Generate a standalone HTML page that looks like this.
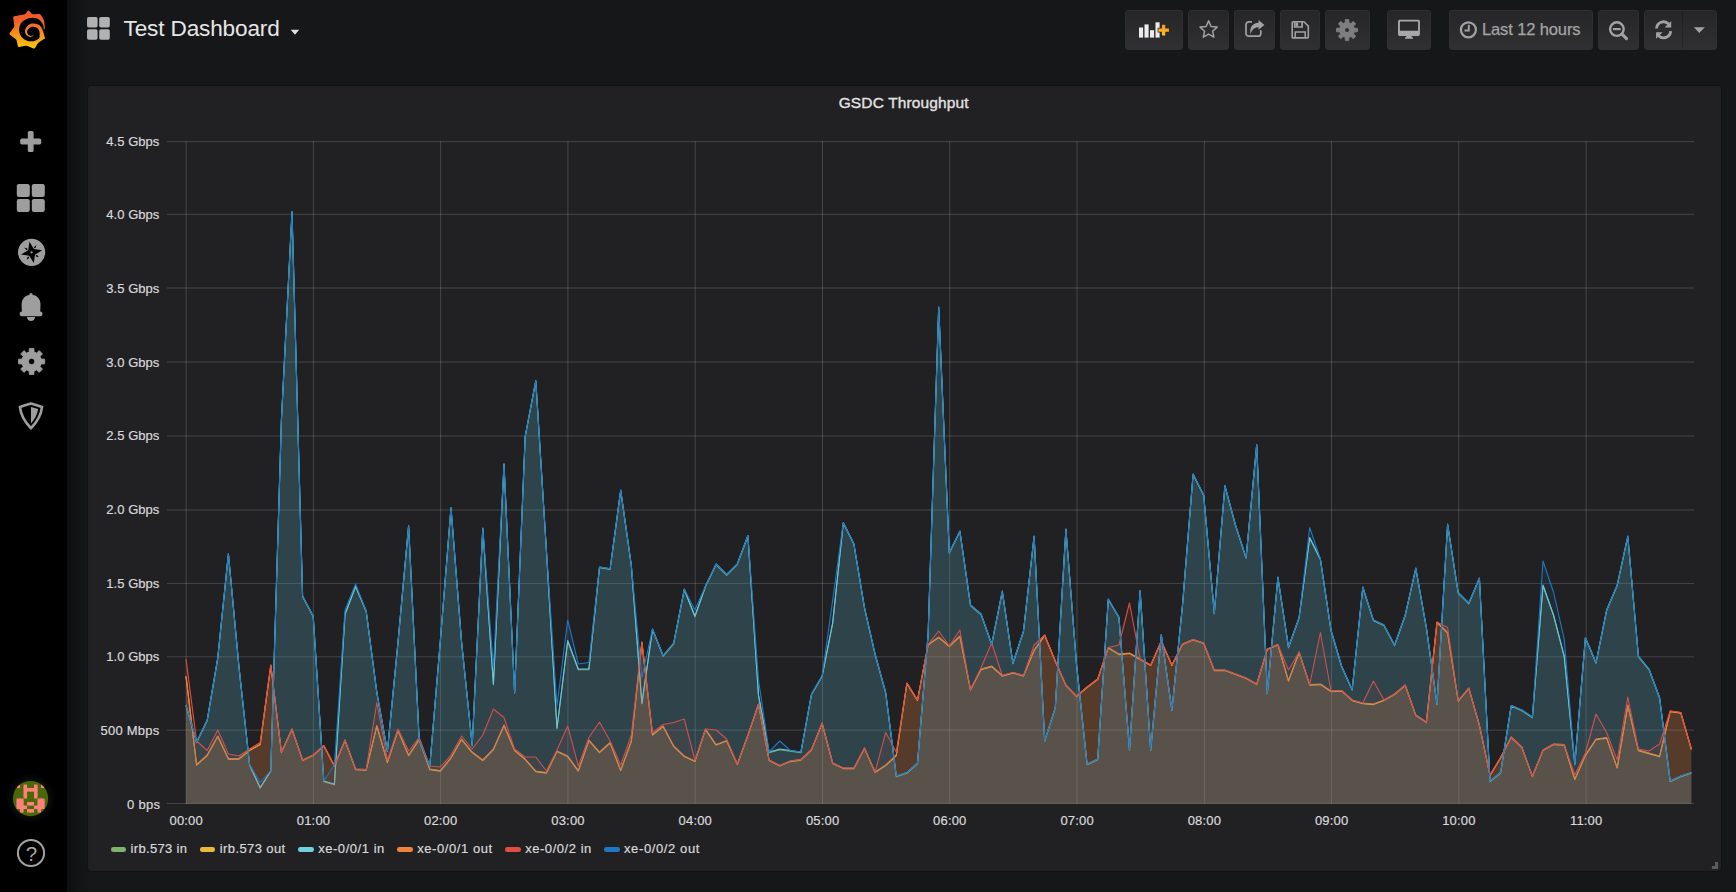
<!DOCTYPE html>
<html lang="en">
<head>
<meta charset="utf-8">
<title>Grafana - Test Dashboard</title>
<style>
html,body{margin:0;padding:0;}
body{width:1736px;height:892px;overflow:hidden;background:#161719;font-family:"Liberation Sans",sans-serif;color:#d8d9da;position:relative;}
.abs{position:absolute;}
#side{position:absolute;left:0;top:0;width:67px;height:892px;background:#000;z-index:5;}
#sideshadow{position:absolute;left:67px;top:0;width:24px;height:892px;background:linear-gradient(to right,rgba(0,0,0,0.40) 0%,rgba(0,0,0,0.16) 45%,rgba(0,0,0,0) 100%);z-index:6;}
#side svg{position:absolute;}
#panel{position:absolute;left:88px;top:85.7px;width:1633px;height:785px;background:#212124;border-radius:3px;z-index:2;box-shadow:0 0 0 1px rgba(0,0,0,0.18);}
.chart{position:absolute;left:0;top:0;z-index:3;}
.ax text{font-family:"Liberation Sans",sans-serif;font-size:13px;fill:#d8d9da;stroke:#d8d9da;stroke-width:0.2px;}
#title{position:absolute;left:838.7px;top:94px;white-space:nowrap;font-size:15.5px;line-height:18px;color:#e3e3e3;z-index:4;-webkit-text-stroke:0.35px #e3e3e3;letter-spacing:0.13px;}
#dtitle{position:absolute;left:123.5px;top:15.2px;font-size:22.6px;line-height:28px;color:#e6e6e6;z-index:4;white-space:nowrap;letter-spacing:-0.15px;}
.btn{position:absolute;top:10px;height:38px;border:1px solid #2f2f32;border-radius:3px;background:linear-gradient(to bottom,#262628,#303032);z-index:4;box-sizing:content-box;}
.btn svg{position:absolute;}
#tr{position:absolute;left:32px;top:8px;font-size:16.5px;line-height:20px;color:#a4a4a4;white-space:nowrap;letter-spacing:-0.12px;-webkit-text-stroke:0.25px #a4a4a4;}
#legend{position:absolute;left:0;top:0;z-index:4;}
.lg{position:absolute;top:841.3px;font-size:13px;line-height:16px;color:#d8d9da;white-space:nowrap;-webkit-text-stroke:0.2px #d8d9da;}
.lgi{position:absolute;top:847.3px;height:4.6px;width:15.6px;border-radius:2.3px;}
#help{position:absolute;left:17px;top:839px;width:25px;height:25px;border:1.6px solid #9e9e9e;border-radius:50%;color:#9e9e9e;font-size:18px;line-height:25px;text-align:center;}
</style>
</head>
<body>
<div id="side">
<svg class="logo" width="68" height="60" viewBox="0 0 68 60"><defs><linearGradient id="lg" x1="0" y1="0" x2="0" y2="1"><stop offset="0" stop-color="#f05a28"/><stop offset="0.28" stop-color="#f05f29"/><stop offset="1" stop-color="#fbca0a"/></linearGradient><linearGradient id="lg2" gradientUnits="userSpaceOnUse" x1="0" y1="9.75" x2="0" y2="49"><stop offset="0" stop-color="#f05a28"/><stop offset="0.28" stop-color="#f05f29"/><stop offset="1" stop-color="#fbca0a"/></linearGradient></defs><path d="M27.81,10.87 Q28.58,9.95 29.35,10.88 L31.38,13.33 Q32.15,14.26 33.34,14.22 L39.15,14.03 Q40.35,13.99 40.97,15.02 L43.43,19.14 Q44.05,20.17 44.17,21.37 L44.81,27.86 Q44.92,29.05 43.80,29.47 L43.49,29.58 Q42.37,29.99 42.69,31.15 L42.72,31.26 Q43.04,32.41 43.32,33.58 L44.24,37.50 Q44.52,38.67 43.51,39.31 L39.01,42.19 Q38.00,42.84 37.41,43.89 L35.22,47.84 Q34.63,48.89 33.52,48.45 L27.48,46.04 Q26.36,45.60 25.18,45.82 L19.20,46.98 Q18.02,47.21 17.79,46.03 L16.78,40.99 Q16.54,39.81 15.59,39.08 L9.90,34.69 Q8.94,33.96 9.67,33.01 L13.80,27.59 Q14.53,26.63 14.35,25.44 L13.16,17.53 Q12.98,16.34 14.16,16.15 L23.70,14.59 Q24.88,14.39 25.65,13.47Z" fill="url(#lg2)"/><ellipse cx="31.07" cy="29.72" rx="11.97" ry="11.57" fill="#000"/><circle cx="32.95" cy="28.58" r="10.76" fill="#000"/><path d="M45.11,38.71 L44.96,38.17 L44.77,37.43 L44.54,36.50 L44.28,35.45 L44.00,34.35 L43.70,33.25 L43.37,32.19 L43.04,31.25 L42.72,30.43 L42.41,29.65 L42.09,28.87 L41.73,28.11 L41.31,27.36 L40.81,26.64 L40.21,25.96 L39.51,25.36 L38.71,24.86 L37.84,24.44 L36.92,24.10 L35.98,23.83 L35.03,23.63 L34.10,23.50 L33.18,23.44 L32.30,23.47 L31.44,23.62 L30.61,23.88 L29.86,24.22 L29.16,24.62 L28.52,25.07 L27.94,25.53 L27.42,26.01 L26.95,26.49 L26.52,27.02 L26.14,27.59 L25.81,28.19 L25.55,28.79 L25.34,29.40 L25.18,30.00 L25.07,30.59 L25.02,31.17 L25.03,31.75 L25.12,32.32 L25.25,32.87 L25.44,33.39 L25.67,33.88 L25.93,34.33 L26.22,34.75 L26.54,35.14 L26.91,35.50 L27.32,35.82 L27.76,36.10 L28.21,36.34 L28.68,36.55 L29.14,36.72 L29.59,36.84 L30.04,36.91 L30.49,36.92 L30.92,36.85 L31.34,36.73 L31.73,36.58 L32.08,36.41 L32.40,36.23 L32.68,36.07 L32.92,35.92 L33.12,35.77 L33.28,35.61 L33.39,35.44 L33.47,35.29 L33.52,35.14 L33.56,35.02 L33.59,34.91 L33.62,34.84 L33.62,34.84 L33.56,34.89 L33.49,34.98 L33.41,35.07 L33.31,35.17 L33.19,35.27 L33.06,35.36 L32.91,35.43 L32.71,35.50 L32.46,35.57 L32.16,35.67 L31.83,35.76 L31.49,35.84 L31.14,35.90 L30.80,35.93 L30.49,35.91 L30.22,35.85 L29.92,35.74 L29.59,35.59 L29.23,35.40 L28.88,35.17 L28.55,34.93 L28.25,34.67 L27.99,34.40 L27.80,34.13 L27.63,33.83 L27.47,33.50 L27.33,33.15 L27.22,32.78 L27.15,32.41 L27.11,32.04 L27.12,31.70 L27.16,31.37 L27.25,31.02 L27.38,30.62 L27.55,30.21 L27.75,29.79 L27.99,29.39 L28.26,29.02 L28.55,28.68 L28.86,28.39 L29.24,28.08 L29.68,27.77 L30.15,27.47 L30.64,27.21 L31.13,26.99 L31.62,26.83 L32.08,26.73 L32.53,26.69 L33.05,26.71 L33.69,26.79 L34.39,26.92 L35.11,27.10 L35.81,27.33 L36.45,27.60 L37.00,27.88 L37.42,28.17 L37.76,28.47 L38.08,28.81 L38.38,29.22 L38.67,29.70 L38.94,30.25 L39.18,30.87 L39.38,31.55 L39.54,32.24 L39.64,32.99 L39.67,33.88 L39.65,34.88 L39.59,35.92 L39.52,36.93 L39.44,37.87 L39.38,38.69 L39.36,39.30Z" fill="url(#lg2)"/></svg>
<svg width="67" height="892" viewBox="0 0 67 892" style="left:0;top:0">
<g fill="#9e9e9e">
<!-- plus -->
<rect x="20.2" y="138.6" width="21" height="5.8" rx="1.6"/><rect x="27.8" y="131" width="5.8" height="21" rx="1.6"/>
<!-- apps -->
<rect x="16.8" y="184" width="13" height="13" rx="2.2"/><rect x="31.8" y="184" width="13" height="13" rx="2.2"/><rect x="16.8" y="199" width="13" height="13" rx="2.2"/><rect x="31.8" y="199" width="13" height="13" rx="2.2"/>
<!-- compass -->
<circle cx="31.6" cy="252.45" r="13.6"/>
<!-- bell -->
<circle cx="31.05" cy="294.7" r="1.6"/>
<path d="M21.9,312.5 L21.6,304.6 C21.6,298.6 25.4,294.7 31.05,294.7 C36.7,294.7 40.5,298.6 40.5,304.6 L40.2,312.5 Z"/>
<rect x="19.6" y="311.4" width="22.9" height="4.8" rx="2.3"/>
<path d="M26.9,317 h8.2 c-0.3,2.500 -1.900,4.100 -4.100,4.100 c-2.200,0 -3.800,-1.600 -4.100,-4.100 z"/>
<path d="M29.16,352.01 L29.27,348.41 L33.93,348.41 L34.04,352.01 L36.59,353.06 L39.21,350.59 L42.51,353.89 L40.04,356.51 L41.09,359.06 L44.69,359.17 L44.69,363.83 L41.09,363.94 L40.04,366.49 L42.51,369.11 L39.21,372.41 L36.59,369.94 L34.04,370.99 L33.93,374.59 L29.27,374.59 L29.16,370.99 L26.61,369.94 L23.99,372.41 L20.69,369.11 L23.16,366.49 L22.11,363.94 L18.51,363.83 L18.51,359.17 L22.11,359.06 L23.16,356.51 L20.69,353.89 L23.99,350.59 L26.61,353.06Z M28.40,361.50 a3.20,3.20 0 1,1 6.40,0 a3.20,3.20 0 1,1 -6.40,0Z" fill="#9e9e9e" stroke="#9e9e9e" stroke-width="0.8" stroke-linejoin="round" fill-rule="evenodd"/><path d="M21.79,361.50 a9.80,9.80 0 1,0 19.60,0 a9.80,9.80 0 1,0 -19.60,0Z M28.40,361.50 a3.20,3.20 0 1,1 6.40,0 a3.20,3.20 0 1,1 -6.40,0Z" fill="#9e9e9e" fill-rule="evenodd"/>
</g>
<!-- compass star -->
<g transform="translate(31.6,252.45) rotate(-11.5)"><path d="M0.00,-10.80 L2.90,-2.90 L10.80,0.00 L2.90,2.90 L0.00,10.80 L-2.90,2.90 L-10.80,0.00 L-2.90,-2.90Z" fill="#000"/><path d="M3.46,-3.46 L4.85,-3.53 L6.22,-6.22 L3.53,-4.85Z M3.46,3.46 L3.53,4.85 L6.22,6.22 L4.85,3.53Z M-3.46,3.46 L-4.85,3.53 L-6.22,6.22 L-3.53,4.85Z M-3.46,-3.46 L-3.53,-4.85 L-6.22,-6.22 L-4.85,-3.53Z" fill="#000"/></g>
<circle cx="31.6" cy="252.45" r="1.1" fill="#9e9e9e"/>
<!-- shield -->
<path d="M30.970,403.500 Q26.300,404.700 19.900,406.950 C20.600,413.700 24.300,421.600 30.970,428.250 C37.640,421.600 41.340,413.700 42.040,406.950 Q35.640,404.700 30.970,403.500 Z" fill="none" stroke="#9e9e9e" stroke-width="2.600" stroke-linejoin="round"/>
<path d="M30.970,406.900 L38.150,409.050 Q36.900,417 30.970,423.400 Z" fill="#9e9e9e"/>
</svg>
<svg width="67" height="60" viewBox="0 770 67 60" style="left:0;top:770px"><defs><clipPath id="av"><circle cx="30.55" cy="798.55" r="17.6"/></clipPath><radialGradient id="avg"><stop offset="0.68" stop-color="#0e0e0e"/><stop offset="1" stop-color="#000"/></radialGradient></defs><circle cx="30.55" cy="798.55" r="25" fill="url(#avg)"/><g clip-path="url(#av)"><rect x="10" y="778" width="42" height="42" fill="#4a670a"/><g fill="#ff8078"><rect x="16.55" y="784.55" width="3.50" height="3.50"/><rect x="23.55" y="784.55" width="3.50" height="3.50"/><rect x="34.05" y="784.55" width="3.50" height="3.50"/><rect x="41.05" y="784.55" width="3.50" height="3.50"/><rect x="23.55" y="788.05" width="3.50" height="3.50"/><rect x="27.05" y="788.05" width="3.50" height="3.50"/><rect x="30.55" y="788.05" width="3.50" height="3.50"/><rect x="34.05" y="788.05" width="3.50" height="3.50"/><rect x="23.55" y="791.55" width="3.50" height="3.50"/><rect x="34.05" y="791.55" width="3.50" height="3.50"/><rect x="23.55" y="795.05" width="3.50" height="3.50"/><rect x="34.05" y="795.05" width="3.50" height="3.50"/><rect x="16.55" y="798.55" width="3.50" height="3.50"/><rect x="20.05" y="798.55" width="3.50" height="3.50"/><rect x="37.55" y="798.55" width="3.50" height="3.50"/><rect x="41.05" y="798.55" width="3.50" height="3.50"/><rect x="16.55" y="802.05" width="3.50" height="3.50"/><rect x="20.05" y="802.05" width="3.50" height="3.50"/><rect x="27.05" y="802.05" width="3.50" height="3.50"/><rect x="30.55" y="802.05" width="3.50" height="3.50"/><rect x="37.55" y="802.05" width="3.50" height="3.50"/><rect x="41.05" y="802.05" width="3.50" height="3.50"/><rect x="16.55" y="805.55" width="3.50" height="3.50"/><rect x="20.05" y="805.55" width="3.50" height="3.50"/><rect x="23.55" y="805.55" width="3.50" height="3.50"/><rect x="34.05" y="805.55" width="3.50" height="3.50"/><rect x="37.55" y="805.55" width="3.50" height="3.50"/><rect x="41.05" y="805.55" width="3.50" height="3.50"/><rect x="20.05" y="809.05" width="3.50" height="3.50"/><rect x="27.05" y="809.05" width="3.50" height="3.50"/><rect x="30.55" y="809.05" width="3.50" height="3.50"/><rect x="37.55" y="809.05" width="3.50" height="3.50"/><rect x="19.25" y="798.55" width="1.6" height="3.50"/><rect x="16.55" y="801.25" width="3.50" height="1.6"/><rect x="19.25" y="801.25" width="1.6" height="1.6"/><rect x="40.25" y="798.55" width="1.6" height="3.50"/><rect x="37.55" y="801.25" width="3.50" height="1.6"/><rect x="40.25" y="801.25" width="1.6" height="1.6"/><rect x="20.05" y="804.75" width="3.50" height="1.6"/><rect x="41.05" y="804.75" width="3.50" height="1.6"/><rect x="23.55" y="787.25" width="3.50" height="1.6"/><rect x="34.05" y="787.25" width="3.50" height="1.6"/><rect x="23.55" y="794.25" width="3.50" height="1.6"/><rect x="34.05" y="794.25" width="3.50" height="1.6"/><rect x="29.75" y="788.05" width="1.6" height="3.50"/><rect x="36.75" y="805.55" width="1.6" height="3.50"/><rect x="19.25" y="802.05" width="1.6" height="3.50"/><rect x="16.55" y="804.75" width="3.50" height="1.6"/><rect x="19.25" y="804.75" width="1.6" height="1.6"/><rect x="40.25" y="802.05" width="1.6" height="3.50"/><rect x="37.55" y="804.75" width="3.50" height="1.6"/><rect x="40.25" y="804.75" width="1.6" height="1.6"/><rect x="29.75" y="802.05" width="1.6" height="3.50"/><rect x="26.25" y="788.05" width="1.6" height="3.50"/><rect x="23.55" y="790.75" width="3.50" height="1.6"/><rect x="34.05" y="790.75" width="3.50" height="1.6"/><rect x="22.75" y="805.55" width="1.6" height="3.50"/><rect x="20.05" y="808.25" width="3.50" height="1.6"/><rect x="29.75" y="809.05" width="1.6" height="3.50"/><rect x="20.05" y="801.25" width="3.50" height="1.6"/><rect x="41.05" y="801.25" width="3.50" height="1.6"/><rect x="33.25" y="788.05" width="1.6" height="3.50"/><rect x="19.25" y="805.55" width="1.6" height="3.50"/><rect x="40.25" y="805.55" width="1.6" height="3.50"/><rect x="37.55" y="808.25" width="3.50" height="1.6"/></g></g></svg>
<svg width="67" height="50" viewBox="0 830 67 50" style="left:0;top:830px"><circle cx="31" cy="853" r="13.1" fill="none" stroke="#a3a3a3" stroke-width="2"/><text x="31.4" y="860.8" text-anchor="middle" font-family="Liberation Sans, sans-serif" font-size="20.5" fill="#a8a8a8">?</text></svg>
</div>
<div id="sideshadow"></div>

<svg class="abs" style="left:87px;top:17px;z-index:4" width="24" height="24" viewBox="0 0 24 24"><g fill="#b2b2b2"><rect x="0" y="0" width="10.6" height="10.6" rx="1.8"/><rect x="12.2" y="0" width="10.6" height="10.6" rx="1.8"/><rect x="0" y="12.2" width="10.6" height="10.6" rx="1.8"/><rect x="12.2" y="12.2" width="10.6" height="10.6" rx="1.8"/></g></svg>
<div id="dtitle">Test Dashboard</div>
<svg class="abs" style="left:290px;top:29px;z-index:4" width="10" height="7" viewBox="0 0 10 7"><path d="M0.700,0.800 H9.200 L5,5.800 Z" fill="#e0e0e0"/></svg>

<div class="btn" style="left:1125px;width:56px"><svg style="left:0;top:0" width="56" height="38" viewBox="1126 11 56 38"><g fill="#ececec"><rect x="1139" y="27.500" width="4.100" height="10.100"/><rect x="1144.500" y="24.400" width="4.100" height="13.200"/><rect x="1150" y="30.200" width="4.100" height="7.400"/><rect x="1155.500" y="22.300" width="4.100" height="15.300"/></g><defs><linearGradient id="pg" x1="0" y1="0" x2="0" y2="1"><stop offset="0" stop-color="#f7941e"/><stop offset="1" stop-color="#fdc12e"/></linearGradient></defs><path d="M1158.300,28.500 h3.650 v-3.650 h3.300 v3.650 h3.650 v3.300 h-3.650 v3.650 h-3.300 v-3.650 h-3.650 z" fill="url(#pg)" stroke="#29292b" stroke-width="1.400" paint-order="stroke"/></svg></div>
<div class="btn" style="left:1188px;width:39px"><svg style="left:0;top:0" width="39" height="38" viewBox="1189 11 39 38"><path d="M1208.60,20.90 L1211.07,26.50 L1217.16,27.12 L1212.59,31.20 L1213.89,37.18 L1208.60,34.10 L1203.31,37.18 L1204.61,31.20 L1200.04,27.12 L1206.13,26.50Z" fill="none" stroke="#a2a2a2" stroke-width="1.500" stroke-linejoin="round"/></svg></div>
<div class="btn" style="left:1234px;width:39px"><svg style="left:0;top:0" width="39" height="38" viewBox="1235 11 39 38"><path d="M1251.300,21.800 H1248.800 a2.800,2.800 0 0 0 -2.800,2.800 V33.400 a2.800,2.800 0 0 0 2.800,2.800 H1258 a2.800,2.800 0 0 0 2.800,-2.800 V30.800" fill="none" stroke="#a2a2a2" stroke-width="1.700" stroke-linecap="round"/><path d="M1258.600,20.100 L1264.400,24.900 L1258.600,29.800 V27.300 C1254.500,27.300 1251.800,29.500 1250.600,34.300 C1249.200,27.500 1252.500,22.800 1258.600,22.700 Z" fill="#a2a2a2"/></svg></div>
<div class="btn" style="left:1280px;width:38px"><svg style="left:0;top:0" width="38" height="38" viewBox="1281 11 38 38"><path d="M1293.100,21.800 H1304 L1308.300,26.100 V37 a0.900,0.900 0 0 1 -0.900,0.900 H1293.100 a0.900,0.900 0 0 1 -0.900,-0.900 V22.700 a0.900,0.900 0 0 1 0.900,-0.900 Z" fill="none" stroke="#a2a2a2" stroke-width="1.600" stroke-linejoin="round"/><path d="M1294.600,22 V27 H1302.200 V22 M1295.200,37.900 V31.900 H1305.200 V37.900" fill="none" stroke="#a2a2a2" stroke-width="1.500"/><path d="M1295.400,22.500 h2.800 v3.800 h-2.800 z M1301,22.500 h0.600 v3.800 h-0.600 z" fill="#a2a2a2"/></svg></div>
<div class="btn" style="left:1325px;width:43px"><svg style="left:0;top:0" width="43" height="38" viewBox="1326 11 43 38"><path d="M1345.13,22.80 L1345.34,19.49 L1348.76,19.49 L1348.97,22.80 L1350.82,23.56 L1353.31,21.37 L1355.73,23.79 L1353.54,26.28 L1354.30,28.13 L1357.61,28.34 L1357.61,31.76 L1354.30,31.97 L1353.54,33.82 L1355.73,36.31 L1353.31,38.73 L1350.82,36.54 L1348.97,37.30 L1348.76,40.61 L1345.34,40.61 L1345.13,37.30 L1343.28,36.54 L1340.79,38.73 L1338.37,36.31 L1340.56,33.82 L1339.80,31.97 L1336.49,31.76 L1336.49,28.34 L1339.80,28.13 L1340.56,26.28 L1338.37,23.79 L1340.79,21.37 L1343.28,23.56Z M1344.65,30.05 a2.40,2.40 0 1,1 4.80,0 a2.40,2.40 0 1,1 -4.80,0Z" fill="#7e7e7e" stroke="#7e7e7e" stroke-width="0.8" stroke-linejoin="round" fill-rule="evenodd"/><path d="M1339.54,30.05 a7.50,7.50 0 1,0 15.00,0 a7.50,7.50 0 1,0 -15.00,0Z M1344.65,30.05 a2.40,2.40 0 1,1 4.80,0 a2.40,2.40 0 1,1 -4.80,0Z" fill="#7e7e7e" fill-rule="evenodd"/></svg></div>
<div class="btn" style="left:1387px;width:42px"><svg style="left:0;top:0" width="42" height="38" viewBox="1388 11 42 38"><path d="M1399.600,19.700 H1418.300 a1.600,1.600 0 0 1 1.600,1.600 V34.300 a1.600,1.600 0 0 1 -1.600,1.600 H1399.600 a1.600,1.600 0 0 1 -1.600,-1.600 V21.300 a1.600,1.600 0 0 1 1.600,-1.600 Z M1399.900,21.400 V30.700 H1418.100 V21.400 Z" fill="#a8a8a8" fill-rule="evenodd"/><path d="M1406.600,35.800 h4.800 l0.500,1.500 h1.100 v1.400 h-8 v-1.400 h1.100 z" fill="#a8a8a8"/></svg></div>
<div class="btn" style="left:1449px;width:142px"><svg style="left:0;top:0" width="40" height="38" viewBox="1450 11 40 38"><circle cx="1468.400" cy="29.800" r="7.500" fill="none" stroke="#a2a2a2" stroke-width="2.200"/><path d="M1468.800,24.800 V30.500 H1464.500" fill="none" stroke="#a2a2a2" stroke-width="1.900"/></svg><div id="tr">Last 12 hours</div></div>
<div class="btn" style="left:1598px;width:39px"><svg style="left:0;top:0" width="39" height="38" viewBox="1599 11 39 38"><circle cx="1616.900" cy="29.100" r="6.800" fill="none" stroke="#a2a2a2" stroke-width="2.400"/><path d="M1622,34.200 L1626.500,38.600" stroke="#a2a2a2" stroke-width="3.100" stroke-linecap="round"/><path d="M1612.900,29.100 H1620.700" stroke="#a2a2a2" stroke-width="2.200"/></svg></div>
<div class="btn" style="left:1644px;width:71px"><svg style="left:0;top:0" width="71" height="38" viewBox="1645 11 71 38"><g transform="translate(1663.6,29.8) scale(0.88) translate(-1663.3,-30)"><path d="M1655.300,28.500 A8,8 0 0 1 1669,23.300" fill="none" stroke="#a2a2a2" stroke-width="3.200"/><path d="M1671.900,19.900 V27.300 H1664.500 Z" fill="#a2a2a2"/><path d="M1671.300,31.500 A8,8 0 0 1 1657.600,36.700" fill="none" stroke="#a2a2a2" stroke-width="3.200"/><path d="M1654.700,40.100 V32.700 H1662.100 Z" fill="#a2a2a2"/></g><path d="M1682.500,11 V49" stroke="#000" stroke-opacity="0.16" stroke-width="1"/><path d="M1693.800,27.300 H1704.800 L1699.300,33 Z" fill="#a2a2a2"/></svg></div>

<div id="panel"></div>
<svg class="chart" width="1736" height="892" viewBox="0 0 1736 892"><g stroke="#c8c8c8" stroke-opacity="0.22" stroke-width="1" fill="none"><path d="M167,141.6 H1694"/><path d="M167,214.3 H1694"/><path d="M167,288.0 H1694"/><path d="M167,362.0 H1694"/><path d="M167,436.0 H1694"/><path d="M167,510.0 H1694"/><path d="M167,583.4 H1694"/><path d="M167,656.8 H1694"/><path d="M167,730.1 H1694"/><path d="M167,803.5 H1694"/><path d="M186.1,141 V804"/><path d="M313.4,141 V804"/><path d="M440.6,141 V804"/><path d="M567.9,141 V804"/><path d="M695.2,141 V804"/><path d="M822.5,141 V804"/><path d="M949.7,141 V804"/><path d="M1077.0,141 V804"/><path d="M1204.3,141 V804"/><path d="M1331.5,141 V804"/><path d="M1458.8,141 V804"/><path d="M1586.1,141 V804"/></g>
<path d="M186.0,705.8 L196.6,742.8 L207.2,720.8 L217.8,658.3 L228.4,554.3 L239.0,667.8 L249.6,765.3 L260.2,788.3 L270.8,771.3 L281.4,420.8 L292.0,212.3 L302.6,596.8 L313.2,616.8 L323.8,781.8 L334.4,784.8 L345.0,614.8 L355.6,586.8 L366.2,611.8 L376.8,692.8 L387.4,751.8 L398.0,642.8 L408.6,526.3 L419.2,740.8 L429.8,766.8 L440.4,640.8 L451.0,508.3 L461.6,642.8 L472.2,745.8 L482.8,528.8 L493.4,684.8 L504.0,464.6 L514.6,693.3 L525.2,436.8 L535.8,381.3 L546.4,550.8 L557.0,728.8 L567.7,641.3 L578.3,669.8 L588.9,669.8 L599.5,567.8 L610.1,569.5 L620.7,490.8 L631.3,565.8 L641.9,703.8 L652.5,629.8 L663.1,656.3 L673.7,643.8 L684.3,589.8 L694.9,616.8 L705.5,586.8 L716.1,564.8 L726.7,575.3 L737.3,564.5 L747.9,536.3 L758.5,695.8 L769.1,752.8 L779.7,749.8 L790.3,751.3 L800.9,752.8 L811.5,694.8 L822.1,676.8 L832.7,623.3 L843.3,523.3 L853.9,544.5 L864.5,608.3 L875.1,654.8 L885.7,693.3 L896.3,776.8 L906.9,773.3 L917.5,763.8 L928.1,635.3 L938.7,307.8 L949.3,553.3 L959.9,531.8 L970.5,605.8 L981.1,614.8 L991.7,644.8 L1002.3,591.8 L1012.9,663.8 L1023.5,631.8 L1034.1,536.8 L1044.7,741.3 L1055.3,708.3 L1065.9,529.8 L1076.5,664.8 L1087.1,764.8 L1097.7,759.8 L1108.3,599.8 L1118.9,617.8 L1129.5,750.3 L1140.1,591.3 L1150.7,750.8 L1161.3,635.3 L1171.9,710.8 L1182.5,605.8 L1193.1,474.8 L1203.7,495.8 L1214.3,613.8 L1224.9,486.3 L1235.5,525.8 L1246.1,558.3 L1256.7,445.3 L1267.3,693.8 L1277.9,577.8 L1288.5,647.8 L1299.1,618.3 L1309.7,538.3 L1320.4,559.8 L1331.0,630.8 L1341.6,666.8 L1352.2,690.3 L1362.8,587.8 L1373.4,620.8 L1384.0,625.8 L1394.6,645.8 L1405.2,615.8 L1415.8,568.8 L1426.4,628.3 L1437.0,704.8 L1447.6,524.8 L1458.2,593.3 L1468.8,603.8 L1479.4,578.8 L1490.0,781.8 L1500.6,773.3 L1511.2,706.3 L1521.8,710.8 L1532.4,717.8 L1543.0,585.8 L1553.6,615.8 L1564.2,656.8 L1574.8,764.8 L1585.4,638.3 L1596.0,663.3 L1606.6,610.8 L1617.2,585.8 L1627.8,536.8 L1638.4,656.8 L1649.0,669.8 L1659.6,698.3 L1670.2,781.8 L1680.8,776.8 L1691.4,773.3 L1691.4,803.8 L186.0,803.8 Z" fill="#7EB26D" fill-opacity="0.1" stroke="none"/>
<path d="M186.0,705.8 L196.6,742.8 L207.2,720.8 L217.8,658.3 L228.4,554.3 L239.0,667.8 L249.6,765.3 L260.2,788.3 L270.8,771.3 L281.4,420.8 L292.0,212.3 L302.6,596.8 L313.2,616.8 L323.8,781.8 L334.4,784.8 L345.0,614.8 L355.6,586.8 L366.2,611.8 L376.8,692.8 L387.4,751.8 L398.0,642.8 L408.6,526.3 L419.2,740.8 L429.8,766.8 L440.4,640.8 L451.0,508.3 L461.6,642.8 L472.2,745.8 L482.8,528.8 L493.4,684.8 L504.0,464.6 L514.6,693.3 L525.2,436.8 L535.8,381.3 L546.4,550.8 L557.0,728.8 L567.7,641.3 L578.3,669.8 L588.9,669.8 L599.5,567.8 L610.1,569.5 L620.7,490.8 L631.3,565.8 L641.9,703.8 L652.5,629.8 L663.1,656.3 L673.7,643.8 L684.3,589.8 L694.9,616.8 L705.5,586.8 L716.1,564.8 L726.7,575.3 L737.3,564.5 L747.9,536.3 L758.5,695.8 L769.1,752.8 L779.7,749.8 L790.3,751.3 L800.9,752.8 L811.5,694.8 L822.1,676.8 L832.7,623.3 L843.3,523.3 L853.9,544.5 L864.5,608.3 L875.1,654.8 L885.7,693.3 L896.3,776.8 L906.9,773.3 L917.5,763.8 L928.1,635.3 L938.7,307.8 L949.3,553.3 L959.9,531.8 L970.5,605.8 L981.1,614.8 L991.7,644.8 L1002.3,591.8 L1012.9,663.8 L1023.5,631.8 L1034.1,536.8 L1044.7,741.3 L1055.3,708.3 L1065.9,529.8 L1076.5,664.8 L1087.1,764.8 L1097.7,759.8 L1108.3,599.8 L1118.9,617.8 L1129.5,750.3 L1140.1,591.3 L1150.7,750.8 L1161.3,635.3 L1171.9,710.8 L1182.5,605.8 L1193.1,474.8 L1203.7,495.8 L1214.3,613.8 L1224.9,486.3 L1235.5,525.8 L1246.1,558.3 L1256.7,445.3 L1267.3,693.8 L1277.9,577.8 L1288.5,647.8 L1299.1,618.3 L1309.7,538.3 L1320.4,559.8 L1331.0,630.8 L1341.6,666.8 L1352.2,690.3 L1362.8,587.8 L1373.4,620.8 L1384.0,625.8 L1394.6,645.8 L1405.2,615.8 L1415.8,568.8 L1426.4,628.3 L1437.0,704.8 L1447.6,524.8 L1458.2,593.3 L1468.8,603.8 L1479.4,578.8 L1490.0,781.8 L1500.6,773.3 L1511.2,706.3 L1521.8,710.8 L1532.4,717.8 L1543.0,585.8 L1553.6,615.8 L1564.2,656.8 L1574.8,764.8 L1585.4,638.3 L1596.0,663.3 L1606.6,610.8 L1617.2,585.8 L1627.8,536.8 L1638.4,656.8 L1649.0,669.8 L1659.6,698.3 L1670.2,781.8 L1680.8,776.8 L1691.4,773.3" fill="none" stroke="#7EB26D" stroke-width="1.1" stroke-linejoin="round"/>
<path d="M186.0,676.6 L196.6,765.1 L207.2,755.6 L217.8,736.6 L228.4,759.1 L239.0,759.1 L249.6,750.6 L260.2,744.6 L270.8,665.6 L281.4,752.6 L292.0,729.6 L302.6,760.6 L313.2,755.6 L323.8,746.1 L334.4,766.1 L345.0,740.6 L355.6,769.6 L366.2,770.1 L376.8,726.1 L387.4,762.6 L398.0,730.6 L408.6,755.6 L419.2,739.6 L429.8,769.6 L440.4,771.1 L451.0,758.1 L461.6,739.6 L472.2,752.6 L482.8,760.6 L493.4,749.6 L504.0,725.6 L514.6,750.6 L525.2,759.6 L535.8,771.6 L546.4,773.1 L557.0,751.6 L567.7,756.6 L578.3,771.1 L588.9,740.6 L599.5,752.6 L610.1,743.1 L620.7,770.6 L631.3,741.6 L641.9,642.6 L652.5,735.1 L663.1,726.6 L673.7,746.6 L684.3,756.6 L694.9,761.6 L705.5,729.6 L716.1,745.1 L726.7,741.1 L737.3,764.6 L747.9,735.6 L758.5,704.6 L769.1,760.6 L779.7,766.1 L790.3,761.6 L800.9,760.1 L811.5,750.1 L822.1,723.6 L832.7,763.6 L843.3,768.6 L853.9,768.6 L864.5,748.6 L875.1,772.6 L885.7,765.6 L896.3,755.6 L906.9,683.6 L917.5,700.6 L928.1,645.1 L938.7,637.6 L949.3,646.6 L959.9,636.6 L970.5,690.1 L981.1,669.6 L991.7,666.6 L1002.3,676.1 L1012.9,673.1 L1023.5,676.1 L1034.1,650.6 L1044.7,635.6 L1055.3,661.6 L1065.9,685.6 L1076.5,696.6 L1087.1,687.6 L1097.7,679.6 L1108.3,648.1 L1118.9,654.6 L1129.5,653.6 L1140.1,659.6 L1150.7,665.6 L1161.3,641.6 L1171.9,665.6 L1182.5,644.6 L1193.1,640.1 L1203.7,643.6 L1214.3,670.6 L1224.9,670.6 L1235.5,674.6 L1246.1,678.6 L1256.7,684.6 L1267.3,649.6 L1277.9,645.1 L1288.5,681.1 L1299.1,652.6 L1309.7,685.1 L1320.4,684.6 L1331.0,691.6 L1341.6,691.1 L1352.2,700.6 L1362.8,703.6 L1373.4,704.6 L1384.0,700.6 L1394.6,694.6 L1405.2,685.6 L1415.8,715.6 L1426.4,722.6 L1437.0,622.6 L1447.6,633.1 L1458.2,701.1 L1468.8,688.6 L1479.4,725.6 L1490.0,775.6 L1500.6,758.1 L1511.2,737.6 L1521.8,747.6 L1532.4,776.6 L1543.0,750.6 L1553.6,744.6 L1564.2,745.1 L1574.8,779.6 L1585.4,755.6 L1596.0,739.6 L1606.6,738.1 L1617.2,768.1 L1627.8,705.6 L1638.4,750.6 L1649.0,753.6 L1659.6,756.6 L1670.2,711.6 L1680.8,713.1 L1691.4,749.6 L1691.4,803.8 L186.0,803.8 Z" fill="#EAB839" fill-opacity="0.1" stroke="none"/>
<path d="M186.0,676.6 L196.6,765.1 L207.2,755.6 L217.8,736.6 L228.4,759.1 L239.0,759.1 L249.6,750.6 L260.2,744.6 L270.8,665.6 L281.4,752.6 L292.0,729.6 L302.6,760.6 L313.2,755.6 L323.8,746.1 L334.4,766.1 L345.0,740.6 L355.6,769.6 L366.2,770.1 L376.8,726.1 L387.4,762.6 L398.0,730.6 L408.6,755.6 L419.2,739.6 L429.8,769.6 L440.4,771.1 L451.0,758.1 L461.6,739.6 L472.2,752.6 L482.8,760.6 L493.4,749.6 L504.0,725.6 L514.6,750.6 L525.2,759.6 L535.8,771.6 L546.4,773.1 L557.0,751.6 L567.7,756.6 L578.3,771.1 L588.9,740.6 L599.5,752.6 L610.1,743.1 L620.7,770.6 L631.3,741.6 L641.9,642.6 L652.5,735.1 L663.1,726.6 L673.7,746.6 L684.3,756.6 L694.9,761.6 L705.5,729.6 L716.1,745.1 L726.7,741.1 L737.3,764.6 L747.9,735.6 L758.5,704.6 L769.1,760.6 L779.7,766.1 L790.3,761.6 L800.9,760.1 L811.5,750.1 L822.1,723.6 L832.7,763.6 L843.3,768.6 L853.9,768.6 L864.5,748.6 L875.1,772.6 L885.7,765.6 L896.3,755.6 L906.9,683.6 L917.5,700.6 L928.1,645.1 L938.7,637.6 L949.3,646.6 L959.9,636.6 L970.5,690.1 L981.1,669.6 L991.7,666.6 L1002.3,676.1 L1012.9,673.1 L1023.5,676.1 L1034.1,650.6 L1044.7,635.6 L1055.3,661.6 L1065.9,685.6 L1076.5,696.6 L1087.1,687.6 L1097.7,679.6 L1108.3,648.1 L1118.9,654.6 L1129.5,653.6 L1140.1,659.6 L1150.7,665.6 L1161.3,641.6 L1171.9,665.6 L1182.5,644.6 L1193.1,640.1 L1203.7,643.6 L1214.3,670.6 L1224.9,670.6 L1235.5,674.6 L1246.1,678.6 L1256.7,684.6 L1267.3,649.6 L1277.9,645.1 L1288.5,681.1 L1299.1,652.6 L1309.7,685.1 L1320.4,684.6 L1331.0,691.6 L1341.6,691.1 L1352.2,700.6 L1362.8,703.6 L1373.4,704.6 L1384.0,700.6 L1394.6,694.6 L1405.2,685.6 L1415.8,715.6 L1426.4,722.6 L1437.0,622.6 L1447.6,633.1 L1458.2,701.1 L1468.8,688.6 L1479.4,725.6 L1490.0,775.6 L1500.6,758.1 L1511.2,737.6 L1521.8,747.6 L1532.4,776.6 L1543.0,750.6 L1553.6,744.6 L1564.2,745.1 L1574.8,779.6 L1585.4,755.6 L1596.0,739.6 L1606.6,738.1 L1617.2,768.1 L1627.8,705.6 L1638.4,750.6 L1649.0,753.6 L1659.6,756.6 L1670.2,711.6 L1680.8,713.1 L1691.4,749.6" fill="none" stroke="#EAB839" stroke-width="1.1" stroke-linejoin="round"/>
<path d="M186.0,705.0 L196.6,742.0 L207.2,720.0 L217.8,657.5 L228.4,553.5 L239.0,667.0 L249.6,764.5 L260.2,787.5 L270.8,770.5 L281.4,420.0 L292.0,211.5 L302.6,596.0 L313.2,616.0 L323.8,781.0 L334.4,784.0 L345.0,614.0 L355.6,586.0 L366.2,611.0 L376.8,692.0 L387.4,751.0 L398.0,642.0 L408.6,525.5 L419.2,740.0 L429.8,766.0 L440.4,640.0 L451.0,507.5 L461.6,642.0 L472.2,745.0 L482.8,528.0 L493.4,684.0 L504.0,463.8 L514.6,692.5 L525.2,436.0 L535.8,380.5 L546.4,550.0 L557.0,728.0 L567.7,640.5 L578.3,669.0 L588.9,669.0 L599.5,567.0 L610.1,568.8 L620.7,490.0 L631.3,565.0 L641.9,703.0 L652.5,629.0 L663.1,655.5 L673.7,643.0 L684.3,589.0 L694.9,616.0 L705.5,586.0 L716.1,564.0 L726.7,574.5 L737.3,563.8 L747.9,535.5 L758.5,695.0 L769.1,752.0 L779.7,749.0 L790.3,750.5 L800.9,752.0 L811.5,694.0 L822.1,676.0 L832.7,622.5 L843.3,522.5 L853.9,543.8 L864.5,607.5 L875.1,654.0 L885.7,692.5 L896.3,776.0 L906.9,772.5 L917.5,763.0 L928.1,634.5 L938.7,307.0 L949.3,552.5 L959.9,531.0 L970.5,605.0 L981.1,614.0 L991.7,644.0 L1002.3,591.0 L1012.9,663.0 L1023.5,631.0 L1034.1,536.0 L1044.7,740.5 L1055.3,707.5 L1065.9,529.0 L1076.5,664.0 L1087.1,764.0 L1097.7,759.0 L1108.3,599.0 L1118.9,617.0 L1129.5,749.5 L1140.1,590.5 L1150.7,750.0 L1161.3,634.5 L1171.9,710.0 L1182.5,605.0 L1193.1,474.0 L1203.7,495.0 L1214.3,613.0 L1224.9,485.5 L1235.5,525.0 L1246.1,557.5 L1256.7,444.5 L1267.3,693.0 L1277.9,577.0 L1288.5,647.0 L1299.1,617.5 L1309.7,537.5 L1320.4,559.0 L1331.0,630.0 L1341.6,666.0 L1352.2,689.5 L1362.8,587.0 L1373.4,620.0 L1384.0,625.0 L1394.6,645.0 L1405.2,615.0 L1415.8,568.0 L1426.4,627.5 L1437.0,704.0 L1447.6,524.0 L1458.2,592.5 L1468.8,603.0 L1479.4,578.0 L1490.0,781.0 L1500.6,772.5 L1511.2,705.5 L1521.8,710.0 L1532.4,717.0 L1543.0,585.0 L1553.6,615.0 L1564.2,656.0 L1574.8,764.0 L1585.4,637.5 L1596.0,662.5 L1606.6,610.0 L1617.2,585.0 L1627.8,536.0 L1638.4,656.0 L1649.0,669.0 L1659.6,697.5 L1670.2,781.0 L1680.8,776.0 L1691.4,772.5 L1691.4,803.8 L186.0,803.8 Z" fill="#6ED0E0" fill-opacity="0.1" stroke="none"/>
<path d="M186.0,705.0 L196.6,742.0 L207.2,720.0 L217.8,657.5 L228.4,553.5 L239.0,667.0 L249.6,764.5 L260.2,787.5 L270.8,770.5 L281.4,420.0 L292.0,211.5 L302.6,596.0 L313.2,616.0 L323.8,781.0 L334.4,784.0 L345.0,614.0 L355.6,586.0 L366.2,611.0 L376.8,692.0 L387.4,751.0 L398.0,642.0 L408.6,525.5 L419.2,740.0 L429.8,766.0 L440.4,640.0 L451.0,507.5 L461.6,642.0 L472.2,745.0 L482.8,528.0 L493.4,684.0 L504.0,463.8 L514.6,692.5 L525.2,436.0 L535.8,380.5 L546.4,550.0 L557.0,728.0 L567.7,640.5 L578.3,669.0 L588.9,669.0 L599.5,567.0 L610.1,568.8 L620.7,490.0 L631.3,565.0 L641.9,703.0 L652.5,629.0 L663.1,655.5 L673.7,643.0 L684.3,589.0 L694.9,616.0 L705.5,586.0 L716.1,564.0 L726.7,574.5 L737.3,563.8 L747.9,535.5 L758.5,695.0 L769.1,752.0 L779.7,749.0 L790.3,750.5 L800.9,752.0 L811.5,694.0 L822.1,676.0 L832.7,622.5 L843.3,522.5 L853.9,543.8 L864.5,607.5 L875.1,654.0 L885.7,692.5 L896.3,776.0 L906.9,772.5 L917.5,763.0 L928.1,634.5 L938.7,307.0 L949.3,552.5 L959.9,531.0 L970.5,605.0 L981.1,614.0 L991.7,644.0 L1002.3,591.0 L1012.9,663.0 L1023.5,631.0 L1034.1,536.0 L1044.7,740.5 L1055.3,707.5 L1065.9,529.0 L1076.5,664.0 L1087.1,764.0 L1097.7,759.0 L1108.3,599.0 L1118.9,617.0 L1129.5,749.5 L1140.1,590.5 L1150.7,750.0 L1161.3,634.5 L1171.9,710.0 L1182.5,605.0 L1193.1,474.0 L1203.7,495.0 L1214.3,613.0 L1224.9,485.5 L1235.5,525.0 L1246.1,557.5 L1256.7,444.5 L1267.3,693.0 L1277.9,577.0 L1288.5,647.0 L1299.1,617.5 L1309.7,537.5 L1320.4,559.0 L1331.0,630.0 L1341.6,666.0 L1352.2,689.5 L1362.8,587.0 L1373.4,620.0 L1384.0,625.0 L1394.6,645.0 L1405.2,615.0 L1415.8,568.0 L1426.4,627.5 L1437.0,704.0 L1447.6,524.0 L1458.2,592.5 L1468.8,603.0 L1479.4,578.0 L1490.0,781.0 L1500.6,772.5 L1511.2,705.5 L1521.8,710.0 L1532.4,717.0 L1543.0,585.0 L1553.6,615.0 L1564.2,656.0 L1574.8,764.0 L1585.4,637.5 L1596.0,662.5 L1606.6,610.0 L1617.2,585.0 L1627.8,536.0 L1638.4,656.0 L1649.0,669.0 L1659.6,697.5 L1670.2,781.0 L1680.8,776.0 L1691.4,772.5" fill="none" stroke="#6ED0E0" stroke-width="1.1" stroke-linejoin="round"/>
<path d="M186.0,676.0 L196.6,764.5 L207.2,755.0 L217.8,736.0 L228.4,758.5 L239.0,758.5 L249.6,750.0 L260.2,744.0 L270.8,665.0 L281.4,752.0 L292.0,729.0 L302.6,760.0 L313.2,755.0 L323.8,745.5 L334.4,765.5 L345.0,740.0 L355.6,769.0 L366.2,769.5 L376.8,725.5 L387.4,762.0 L398.0,730.0 L408.6,755.0 L419.2,739.0 L429.8,769.0 L440.4,770.5 L451.0,757.5 L461.6,739.0 L472.2,752.0 L482.8,760.0 L493.4,749.0 L504.0,725.0 L514.6,750.0 L525.2,759.0 L535.8,771.0 L546.4,772.5 L557.0,751.0 L567.7,756.0 L578.3,770.5 L588.9,740.0 L599.5,752.0 L610.1,742.5 L620.7,770.0 L631.3,741.0 L641.9,642.0 L652.5,734.5 L663.1,726.0 L673.7,746.0 L684.3,756.0 L694.9,761.0 L705.5,729.0 L716.1,744.5 L726.7,740.5 L737.3,764.0 L747.9,735.0 L758.5,704.0 L769.1,760.0 L779.7,765.5 L790.3,761.0 L800.9,759.5 L811.5,749.5 L822.1,723.0 L832.7,763.0 L843.3,768.0 L853.9,768.0 L864.5,748.0 L875.1,772.0 L885.7,765.0 L896.3,755.0 L906.9,683.0 L917.5,700.0 L928.1,644.5 L938.7,637.0 L949.3,646.0 L959.9,636.0 L970.5,689.5 L981.1,669.0 L991.7,666.0 L1002.3,675.5 L1012.9,672.5 L1023.5,675.5 L1034.1,650.0 L1044.7,635.0 L1055.3,661.0 L1065.9,685.0 L1076.5,696.0 L1087.1,687.0 L1097.7,679.0 L1108.3,647.5 L1118.9,654.0 L1129.5,653.0 L1140.1,659.0 L1150.7,665.0 L1161.3,641.0 L1171.9,665.0 L1182.5,644.0 L1193.1,639.5 L1203.7,643.0 L1214.3,670.0 L1224.9,670.0 L1235.5,674.0 L1246.1,678.0 L1256.7,684.0 L1267.3,649.0 L1277.9,644.5 L1288.5,680.5 L1299.1,652.0 L1309.7,684.5 L1320.4,684.0 L1331.0,691.0 L1341.6,690.5 L1352.2,700.0 L1362.8,703.0 L1373.4,704.0 L1384.0,700.0 L1394.6,694.0 L1405.2,685.0 L1415.8,715.0 L1426.4,722.0 L1437.0,622.0 L1447.6,632.5 L1458.2,700.5 L1468.8,688.0 L1479.4,725.0 L1490.0,775.0 L1500.6,757.5 L1511.2,737.0 L1521.8,747.0 L1532.4,776.0 L1543.0,750.0 L1553.6,744.0 L1564.2,744.5 L1574.8,779.0 L1585.4,755.0 L1596.0,739.0 L1606.6,737.5 L1617.2,767.5 L1627.8,705.0 L1638.4,750.0 L1649.0,753.0 L1659.6,756.0 L1670.2,711.0 L1680.8,712.5 L1691.4,749.0 L1691.4,803.8 L186.0,803.8 Z" fill="#EF843C" fill-opacity="0.1" stroke="none"/>
<path d="M186.0,676.0 L196.6,764.5 L207.2,755.0 L217.8,736.0 L228.4,758.5 L239.0,758.5 L249.6,750.0 L260.2,744.0 L270.8,665.0 L281.4,752.0 L292.0,729.0 L302.6,760.0 L313.2,755.0 L323.8,745.5 L334.4,765.5 L345.0,740.0 L355.6,769.0 L366.2,769.5 L376.8,725.5 L387.4,762.0 L398.0,730.0 L408.6,755.0 L419.2,739.0 L429.8,769.0 L440.4,770.5 L451.0,757.5 L461.6,739.0 L472.2,752.0 L482.8,760.0 L493.4,749.0 L504.0,725.0 L514.6,750.0 L525.2,759.0 L535.8,771.0 L546.4,772.5 L557.0,751.0 L567.7,756.0 L578.3,770.5 L588.9,740.0 L599.5,752.0 L610.1,742.5 L620.7,770.0 L631.3,741.0 L641.9,642.0 L652.5,734.5 L663.1,726.0 L673.7,746.0 L684.3,756.0 L694.9,761.0 L705.5,729.0 L716.1,744.5 L726.7,740.5 L737.3,764.0 L747.9,735.0 L758.5,704.0 L769.1,760.0 L779.7,765.5 L790.3,761.0 L800.9,759.5 L811.5,749.5 L822.1,723.0 L832.7,763.0 L843.3,768.0 L853.9,768.0 L864.5,748.0 L875.1,772.0 L885.7,765.0 L896.3,755.0 L906.9,683.0 L917.5,700.0 L928.1,644.5 L938.7,637.0 L949.3,646.0 L959.9,636.0 L970.5,689.5 L981.1,669.0 L991.7,666.0 L1002.3,675.5 L1012.9,672.5 L1023.5,675.5 L1034.1,650.0 L1044.7,635.0 L1055.3,661.0 L1065.9,685.0 L1076.5,696.0 L1087.1,687.0 L1097.7,679.0 L1108.3,647.5 L1118.9,654.0 L1129.5,653.0 L1140.1,659.0 L1150.7,665.0 L1161.3,641.0 L1171.9,665.0 L1182.5,644.0 L1193.1,639.5 L1203.7,643.0 L1214.3,670.0 L1224.9,670.0 L1235.5,674.0 L1246.1,678.0 L1256.7,684.0 L1267.3,649.0 L1277.9,644.5 L1288.5,680.5 L1299.1,652.0 L1309.7,684.5 L1320.4,684.0 L1331.0,691.0 L1341.6,690.5 L1352.2,700.0 L1362.8,703.0 L1373.4,704.0 L1384.0,700.0 L1394.6,694.0 L1405.2,685.0 L1415.8,715.0 L1426.4,722.0 L1437.0,622.0 L1447.6,632.5 L1458.2,700.5 L1468.8,688.0 L1479.4,725.0 L1490.0,775.0 L1500.6,757.5 L1511.2,737.0 L1521.8,747.0 L1532.4,776.0 L1543.0,750.0 L1553.6,744.0 L1564.2,744.5 L1574.8,779.0 L1585.4,755.0 L1596.0,739.0 L1606.6,737.5 L1617.2,767.5 L1627.8,705.0 L1638.4,750.0 L1649.0,753.0 L1659.6,756.0 L1670.2,711.0 L1680.8,712.5 L1691.4,749.0" fill="none" stroke="#EF843C" stroke-width="1.1" stroke-linejoin="round"/>
<path d="M186.0,659.0 L196.6,741.0 L207.2,750.5 L217.8,730.0 L228.4,754.0 L239.0,756.0 L249.6,749.0 L260.2,742.5 L270.8,665.0 L281.4,752.0 L292.0,729.0 L302.6,760.0 L313.2,755.0 L323.8,745.5 L334.4,765.5 L345.0,740.0 L355.6,769.0 L366.2,769.5 L376.8,702.5 L387.4,760.0 L398.0,729.0 L408.6,751.0 L419.2,737.5 L429.8,766.0 L440.4,767.0 L451.0,755.0 L461.6,736.0 L472.2,749.0 L482.8,735.0 L493.4,709.0 L504.0,717.5 L514.6,749.0 L525.2,757.0 L535.8,757.0 L546.4,771.0 L557.0,750.0 L567.7,726.0 L578.3,766.0 L588.9,737.5 L599.5,722.0 L610.1,741.0 L620.7,765.0 L631.3,735.0 L641.9,642.0 L652.5,732.5 L663.1,724.5 L673.7,722.5 L684.3,719.0 L694.9,760.0 L705.5,729.0 L716.1,730.0 L726.7,739.0 L737.3,764.0 L747.9,735.0 L758.5,704.0 L769.1,760.0 L779.7,765.5 L790.3,761.0 L800.9,759.5 L811.5,749.5 L822.1,723.0 L832.7,763.0 L843.3,768.0 L853.9,768.0 L864.5,748.0 L875.1,772.0 L885.7,732.5 L896.3,752.0 L906.9,683.0 L917.5,700.0 L928.1,644.5 L938.7,631.0 L949.3,646.0 L959.9,630.0 L970.5,689.5 L981.1,667.5 L991.7,643.0 L1002.3,675.5 L1012.9,672.5 L1023.5,675.5 L1034.1,645.0 L1044.7,635.0 L1055.3,661.0 L1065.9,685.0 L1076.5,696.0 L1087.1,687.0 L1097.7,679.0 L1108.3,647.5 L1118.9,645.0 L1129.5,603.0 L1140.1,659.0 L1150.7,665.0 L1161.3,641.0 L1171.9,665.0 L1182.5,644.0 L1193.1,639.5 L1203.7,643.0 L1214.3,670.0 L1224.9,670.0 L1235.5,674.0 L1246.1,678.0 L1256.7,684.0 L1267.3,649.0 L1277.9,644.5 L1288.5,670.0 L1299.1,652.0 L1309.7,684.5 L1320.4,632.5 L1331.0,691.0 L1341.6,690.5 L1352.2,700.0 L1362.8,703.0 L1373.4,681.0 L1384.0,700.0 L1394.6,694.0 L1405.2,685.0 L1415.8,715.0 L1426.4,722.0 L1437.0,622.0 L1447.6,627.5 L1458.2,700.5 L1468.8,688.0 L1479.4,725.0 L1490.0,775.0 L1500.6,757.5 L1511.2,737.0 L1521.8,747.0 L1532.4,776.0 L1543.0,750.0 L1553.6,744.0 L1564.2,744.5 L1574.8,775.0 L1585.4,753.0 L1596.0,714.0 L1606.6,732.5 L1617.2,760.0 L1627.8,697.0 L1638.4,749.0 L1649.0,751.0 L1659.6,744.0 L1670.2,711.0 L1680.8,712.5 L1691.4,749.0 L1691.4,803.8 L186.0,803.8 Z" fill="#E24D42" fill-opacity="0.1" stroke="none"/>
<path d="M186.0,659.0 L196.6,741.0 L207.2,750.5 L217.8,730.0 L228.4,754.0 L239.0,756.0 L249.6,749.0 L260.2,742.5 L270.8,665.0 L281.4,752.0 L292.0,729.0 L302.6,760.0 L313.2,755.0 L323.8,745.5 L334.4,765.5 L345.0,740.0 L355.6,769.0 L366.2,769.5 L376.8,702.5 L387.4,760.0 L398.0,729.0 L408.6,751.0 L419.2,737.5 L429.8,766.0 L440.4,767.0 L451.0,755.0 L461.6,736.0 L472.2,749.0 L482.8,735.0 L493.4,709.0 L504.0,717.5 L514.6,749.0 L525.2,757.0 L535.8,757.0 L546.4,771.0 L557.0,750.0 L567.7,726.0 L578.3,766.0 L588.9,737.5 L599.5,722.0 L610.1,741.0 L620.7,765.0 L631.3,735.0 L641.9,642.0 L652.5,732.5 L663.1,724.5 L673.7,722.5 L684.3,719.0 L694.9,760.0 L705.5,729.0 L716.1,730.0 L726.7,739.0 L737.3,764.0 L747.9,735.0 L758.5,704.0 L769.1,760.0 L779.7,765.5 L790.3,761.0 L800.9,759.5 L811.5,749.5 L822.1,723.0 L832.7,763.0 L843.3,768.0 L853.9,768.0 L864.5,748.0 L875.1,772.0 L885.7,732.5 L896.3,752.0 L906.9,683.0 L917.5,700.0 L928.1,644.5 L938.7,631.0 L949.3,646.0 L959.9,630.0 L970.5,689.5 L981.1,667.5 L991.7,643.0 L1002.3,675.5 L1012.9,672.5 L1023.5,675.5 L1034.1,645.0 L1044.7,635.0 L1055.3,661.0 L1065.9,685.0 L1076.5,696.0 L1087.1,687.0 L1097.7,679.0 L1108.3,647.5 L1118.9,645.0 L1129.5,603.0 L1140.1,659.0 L1150.7,665.0 L1161.3,641.0 L1171.9,665.0 L1182.5,644.0 L1193.1,639.5 L1203.7,643.0 L1214.3,670.0 L1224.9,670.0 L1235.5,674.0 L1246.1,678.0 L1256.7,684.0 L1267.3,649.0 L1277.9,644.5 L1288.5,670.0 L1299.1,652.0 L1309.7,684.5 L1320.4,632.5 L1331.0,691.0 L1341.6,690.5 L1352.2,700.0 L1362.8,703.0 L1373.4,681.0 L1384.0,700.0 L1394.6,694.0 L1405.2,685.0 L1415.8,715.0 L1426.4,722.0 L1437.0,622.0 L1447.6,627.5 L1458.2,700.5 L1468.8,688.0 L1479.4,725.0 L1490.0,775.0 L1500.6,757.5 L1511.2,737.0 L1521.8,747.0 L1532.4,776.0 L1543.0,750.0 L1553.6,744.0 L1564.2,744.5 L1574.8,775.0 L1585.4,753.0 L1596.0,714.0 L1606.6,732.5 L1617.2,760.0 L1627.8,697.0 L1638.4,749.0 L1649.0,751.0 L1659.6,744.0 L1670.2,711.0 L1680.8,712.5 L1691.4,749.0" fill="none" stroke="#E24D42" stroke-width="1.1" stroke-linejoin="round"/>
<path d="M186.0,705.0 L196.6,742.0 L207.2,720.0 L217.8,657.5 L228.4,553.5 L239.0,667.0 L249.6,764.5 L260.2,782.5 L270.8,770.5 L281.4,420.0 L292.0,211.5 L302.6,596.0 L313.2,616.0 L323.8,781.0 L334.4,765.0 L345.0,610.0 L355.6,584.0 L366.2,611.0 L376.8,692.0 L387.4,751.0 L398.0,642.0 L408.6,525.5 L419.2,740.0 L429.8,766.0 L440.4,640.0 L451.0,507.5 L461.6,642.0 L472.2,745.0 L482.8,528.0 L493.4,667.5 L504.0,463.8 L514.6,692.5 L525.2,436.0 L535.8,380.5 L546.4,550.0 L557.0,706.0 L567.7,620.0 L578.3,664.0 L588.9,662.5 L599.5,567.0 L610.1,568.8 L620.7,490.0 L631.3,565.0 L641.9,677.5 L652.5,629.0 L663.1,655.5 L673.7,643.0 L684.3,589.0 L694.9,610.0 L705.5,586.0 L716.1,564.0 L726.7,574.5 L737.3,563.8 L747.9,535.5 L758.5,680.0 L769.1,752.0 L779.7,741.0 L790.3,750.5 L800.9,752.0 L811.5,694.0 L822.1,676.0 L832.7,600.0 L843.3,522.5 L853.9,543.8 L864.5,607.5 L875.1,654.0 L885.7,692.5 L896.3,776.0 L906.9,772.5 L917.5,763.0 L928.1,634.5 L938.7,307.0 L949.3,552.5 L959.9,531.0 L970.5,605.0 L981.1,614.0 L991.7,644.0 L1002.3,591.0 L1012.9,663.0 L1023.5,631.0 L1034.1,536.0 L1044.7,740.5 L1055.3,707.5 L1065.9,529.0 L1076.5,664.0 L1087.1,764.0 L1097.7,759.0 L1108.3,599.0 L1118.9,617.0 L1129.5,749.5 L1140.1,590.5 L1150.7,750.0 L1161.3,634.5 L1171.9,710.0 L1182.5,605.0 L1193.1,474.0 L1203.7,495.0 L1214.3,613.0 L1224.9,485.5 L1235.5,525.0 L1246.1,557.5 L1256.7,444.5 L1267.3,693.0 L1277.9,577.0 L1288.5,647.0 L1299.1,617.5 L1309.7,527.5 L1320.4,559.0 L1331.0,630.0 L1341.6,666.0 L1352.2,689.5 L1362.8,587.0 L1373.4,620.0 L1384.0,625.0 L1394.6,645.0 L1405.2,615.0 L1415.8,568.0 L1426.4,627.5 L1437.0,704.0 L1447.6,524.0 L1458.2,592.5 L1468.8,603.0 L1479.4,578.0 L1490.0,781.0 L1500.6,772.5 L1511.2,705.5 L1521.8,710.0 L1532.4,717.0 L1543.0,561.0 L1553.6,592.5 L1564.2,639.0 L1574.8,764.0 L1585.4,637.5 L1596.0,662.5 L1606.6,610.0 L1617.2,585.0 L1627.8,536.0 L1638.4,656.0 L1649.0,669.0 L1659.6,697.5 L1670.2,781.0 L1680.8,776.0 L1691.4,772.5 L1691.4,803.8 L186.0,803.8 Z" fill="#1F78C1" fill-opacity="0.1" stroke="none"/>
<path d="M186.0,705.0 L196.6,742.0 L207.2,720.0 L217.8,657.5 L228.4,553.5 L239.0,667.0 L249.6,764.5 L260.2,782.5 L270.8,770.5 L281.4,420.0 L292.0,211.5 L302.6,596.0 L313.2,616.0 L323.8,781.0 L334.4,765.0 L345.0,610.0 L355.6,584.0 L366.2,611.0 L376.8,692.0 L387.4,751.0 L398.0,642.0 L408.6,525.5 L419.2,740.0 L429.8,766.0 L440.4,640.0 L451.0,507.5 L461.6,642.0 L472.2,745.0 L482.8,528.0 L493.4,667.5 L504.0,463.8 L514.6,692.5 L525.2,436.0 L535.8,380.5 L546.4,550.0 L557.0,706.0 L567.7,620.0 L578.3,664.0 L588.9,662.5 L599.5,567.0 L610.1,568.8 L620.7,490.0 L631.3,565.0 L641.9,677.5 L652.5,629.0 L663.1,655.5 L673.7,643.0 L684.3,589.0 L694.9,610.0 L705.5,586.0 L716.1,564.0 L726.7,574.5 L737.3,563.8 L747.9,535.5 L758.5,680.0 L769.1,752.0 L779.7,741.0 L790.3,750.5 L800.9,752.0 L811.5,694.0 L822.1,676.0 L832.7,600.0 L843.3,522.5 L853.9,543.8 L864.5,607.5 L875.1,654.0 L885.7,692.5 L896.3,776.0 L906.9,772.5 L917.5,763.0 L928.1,634.5 L938.7,307.0 L949.3,552.5 L959.9,531.0 L970.5,605.0 L981.1,614.0 L991.7,644.0 L1002.3,591.0 L1012.9,663.0 L1023.5,631.0 L1034.1,536.0 L1044.7,740.5 L1055.3,707.5 L1065.9,529.0 L1076.5,664.0 L1087.1,764.0 L1097.7,759.0 L1108.3,599.0 L1118.9,617.0 L1129.5,749.5 L1140.1,590.5 L1150.7,750.0 L1161.3,634.5 L1171.9,710.0 L1182.5,605.0 L1193.1,474.0 L1203.7,495.0 L1214.3,613.0 L1224.9,485.5 L1235.5,525.0 L1246.1,557.5 L1256.7,444.5 L1267.3,693.0 L1277.9,577.0 L1288.5,647.0 L1299.1,617.5 L1309.7,527.5 L1320.4,559.0 L1331.0,630.0 L1341.6,666.0 L1352.2,689.5 L1362.8,587.0 L1373.4,620.0 L1384.0,625.0 L1394.6,645.0 L1405.2,615.0 L1415.8,568.0 L1426.4,627.5 L1437.0,704.0 L1447.6,524.0 L1458.2,592.5 L1468.8,603.0 L1479.4,578.0 L1490.0,781.0 L1500.6,772.5 L1511.2,705.5 L1521.8,710.0 L1532.4,717.0 L1543.0,561.0 L1553.6,592.5 L1564.2,639.0 L1574.8,764.0 L1585.4,637.5 L1596.0,662.5 L1606.6,610.0 L1617.2,585.0 L1627.8,536.0 L1638.4,656.0 L1649.0,669.0 L1659.6,697.5 L1670.2,781.0 L1680.8,776.0 L1691.4,772.5" fill="none" stroke="#1F78C1" stroke-width="1.1" stroke-linejoin="round"/>
<g class="ax"><text x="159.33" y="145.5" text-anchor="end" letter-spacing="0.03">4.5 Gbps</text><text x="159.33" y="219.2" text-anchor="end" letter-spacing="0.03">4.0 Gbps</text><text x="159.33" y="292.9" text-anchor="end" letter-spacing="0.03">3.5 Gbps</text><text x="159.33" y="366.6" text-anchor="end" letter-spacing="0.03">3.0 Gbps</text><text x="159.33" y="440.3" text-anchor="end" letter-spacing="0.03">2.5 Gbps</text><text x="159.33" y="514.0" text-anchor="end" letter-spacing="0.03">2.0 Gbps</text><text x="159.33" y="587.7" text-anchor="end" letter-spacing="0.03">1.5 Gbps</text><text x="159.33" y="661.4" text-anchor="end" letter-spacing="0.03">1.0 Gbps</text><text x="159.55" y="735.1" text-anchor="end" letter-spacing="0.25">500 Mbps</text><text x="160.32" y="808.8" text-anchor="end" letter-spacing="0.32">0 bps</text><text x="186.2" y="824.6" text-anchor="middle" letter-spacing="0.18">00:00</text><text x="313.5" y="824.6" text-anchor="middle" letter-spacing="0.18">01:00</text><text x="440.7" y="824.6" text-anchor="middle" letter-spacing="0.18">02:00</text><text x="568.0" y="824.6" text-anchor="middle" letter-spacing="0.18">03:00</text><text x="695.3" y="824.6" text-anchor="middle" letter-spacing="0.18">04:00</text><text x="822.6" y="824.6" text-anchor="middle" letter-spacing="0.18">05:00</text><text x="949.8" y="824.6" text-anchor="middle" letter-spacing="0.18">06:00</text><text x="1077.1" y="824.6" text-anchor="middle" letter-spacing="0.18">07:00</text><text x="1204.4" y="824.6" text-anchor="middle" letter-spacing="0.18">08:00</text><text x="1331.6" y="824.6" text-anchor="middle" letter-spacing="0.18">09:00</text><text x="1458.9" y="824.6" text-anchor="middle" letter-spacing="0.18">10:00</text><text x="1586.2" y="824.6" text-anchor="middle" letter-spacing="0.18">11:00</text></g></svg>
<div id="title">GSDC Throughput</div>
<div id="legend"><div class="lgi" style="left:110.5px;background:#7EB26D"></div><div class="lg" style="left:130.6px;letter-spacing:0.33px">irb.573 in</div><div class="lgi" style="left:199.9px;background:#EAB839"></div><div class="lg" style="left:219.8px;letter-spacing:0.4px">irb.573 out</div><div class="lgi" style="left:298px;background:#6ED0E0"></div><div class="lg" style="left:318.2px;letter-spacing:0.54px">xe-0/0/1 in</div><div class="lgi" style="left:397.3px;background:#EF843C"></div><div class="lg" style="left:417.2px;letter-spacing:0.58px">xe-0/0/1 out</div><div class="lgi" style="left:505px;background:#E24D42"></div><div class="lg" style="left:525.2px;letter-spacing:0.54px">xe-0/0/2 in</div><div class="lgi" style="left:604px;background:#1F78C1"></div><div class="lg" style="left:624px;letter-spacing:0.61px">xe-0/0/2 out</div></div>
<svg class="abs" style="left:1711px;top:861px;z-index:4" width="9" height="9" viewBox="0 0 9 9"><path d="M4,1.100 H7.100 V8 H0.900 V5 H4 Z" fill="#5b5b5d"/></svg>
</body>
</html>
